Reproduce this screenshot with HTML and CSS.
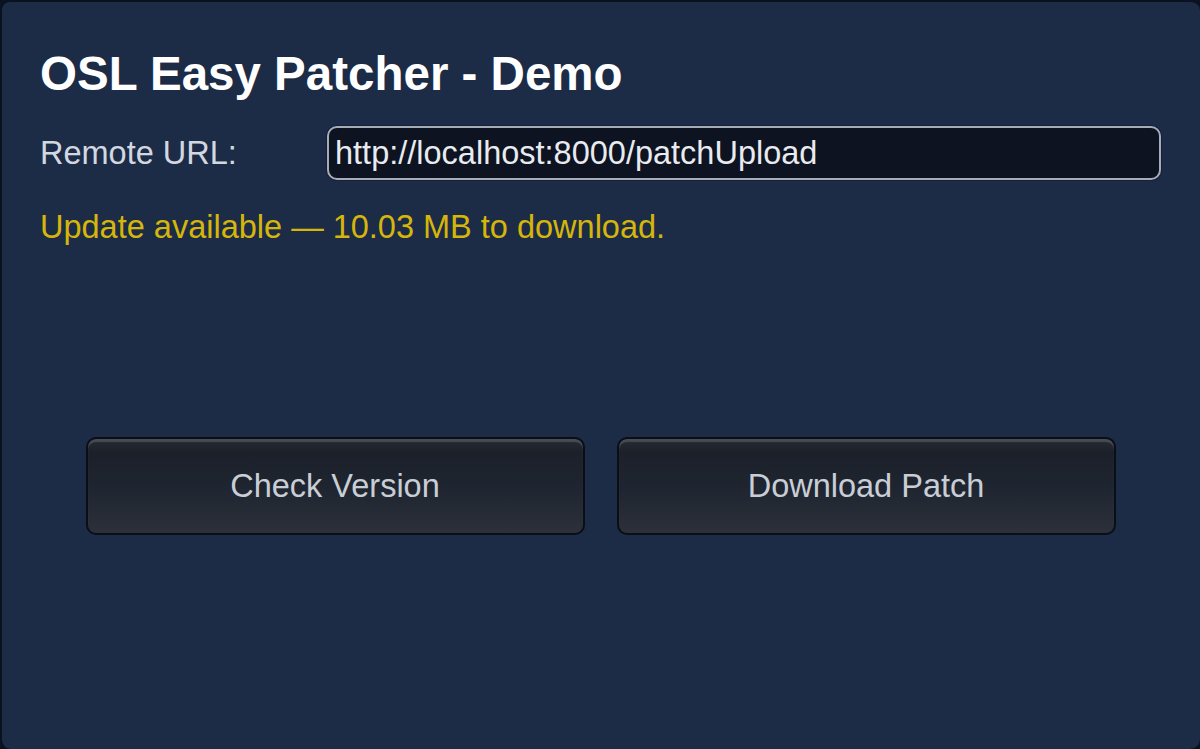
FILE: index.html
```html
<!DOCTYPE html>
<html lang="en">
<head>
<meta charset="utf-8">
<title>OSL Easy Patcher - Demo</title>
<link rel="stylesheet" href="styles.css">
</head>
<body>
<div class="panel">
  <h1 class="title">OSL Easy Patcher - Demo</h1>
  <div class="row">
    <label class="label" for="url">Remote URL:</label>
    <input class="url" id="url" type="text" value="http://localhost:8000/patchUpload">
  </div>
  <div class="status">Update available — 10.03 MB to download.</div>
  <div class="buttons">
    <button class="btn">Check Version</button>
    <button class="btn">Download Patch</button>
  </div>
</div>
</body>
</html>
```

FILE: styles.css
```css
html, body {
  margin: 0;
  padding: 0;
  background: #0b1322;
  font-family: "Liberation Sans", Arial, sans-serif;
}
.panel {
  box-sizing: border-box;
  width: 1200px;
  height: 749px;
  background: #1c2c47;
  border-top: 2px solid #0a1220;
  border-left: 2px solid #0a1220;
  border-radius: 10px;
  padding: 45px 39px 0 38px;
  display: flex;
  flex-direction: column;
}
.title {
  margin: 0;
  font-size: 47.5px;
  line-height: 54px;
  font-weight: bold;
  color: #ffffff;
}
.row {
  margin-top: 25px;
  display: flex;
  align-items: center;
}
.label {
  width: 287px;
  flex: none;
  font-size: 32.5px;
  color: #d3d8e0;
}
.url {
  flex: 1;
  box-sizing: border-box;
  height: 54px;
  margin: 0;
  padding: 0 6px;
  background: #0d1320;
  border: 2px solid #a7adb8;
  border-radius: 10px;
  box-shadow: 0 0 0 1px #15203a;
  color: #e8ebef;
  font-family: "Liberation Sans", Arial, sans-serif;
  font-size: 32.5px;
  outline: none;
}
.status {
  margin-top: 28px;
  font-size: 32.5px;
  line-height: 38px;
  color: #d6b60a;
}
.buttons {
  margin-top: 191px;
  display: flex;
  justify-content: center;
  gap: 32px;
}
.btn {
  box-sizing: border-box;
  width: 499px;
  height: 98px;
  border: 2px solid #0a0e16;
  border-radius: 10px;
  background: linear-gradient(#262b34 0, #1b2029 14%, #1f2530 50%, #2b303a 100%);
  box-shadow: inset 0 3px 1px rgba(255,255,255,0.16);
  color: #c9ced6;
  font-family: "Liberation Sans", Arial, sans-serif;
  font-size: 32.5px;
  cursor: pointer;
}
```
